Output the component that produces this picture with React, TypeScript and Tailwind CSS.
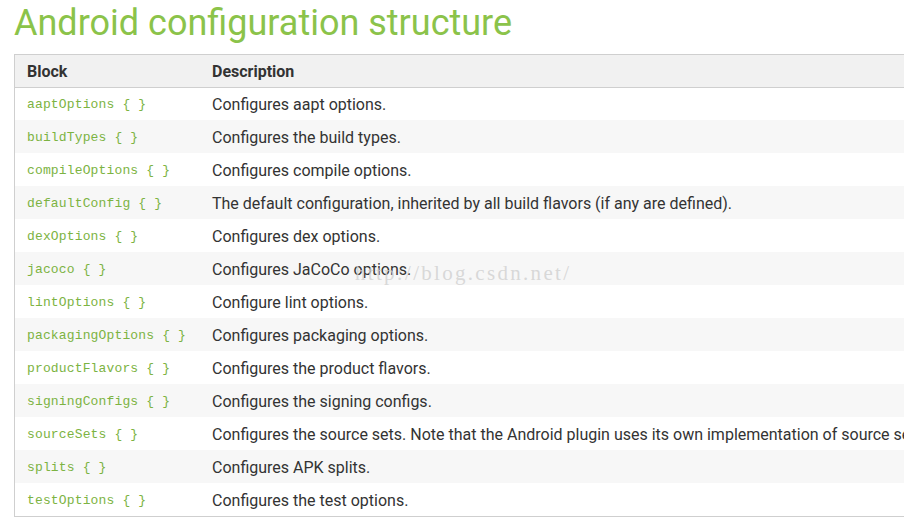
const rows: [string, string][] = [
  ["aaptOptions { }", "Configures aapt options."],
  ["buildTypes { }", "Configures the build types."],
  ["compileOptions { }", "Configures compile options."],
  ["defaultConfig { }", "The default configuration, inherited by all build flavors (if any are defined)."],
  ["dexOptions { }", "Configures dex options."],
  ["jacoco { }", "Configures JaCoCo options."],
  ["lintOptions { }", "Configure lint options."],
  ["packagingOptions { }", "Configures packaging options."],
  ["productFlavors { }", "Configures the product flavors."],
  ["signingConfigs { }", "Configures the signing configs."],
  [
    "sourceSets { }",
    "Configures the source sets. Note that the Android plugin uses its own implementation of source sets, which is not compatible with the Java plugin's source sets.",
  ],
  ["splits { }", "Configures APK splits."],
  ["testOptions { }", "Configures the test options."],
];

export default function App() {
  return (
    <div className="relative w-[904px] h-[522px] overflow-hidden bg-white font-['Roboto',sans-serif]">
      <h1 className="pl-[14px] pt-[1px] h-[54px] text-[36px] leading-[44px] text-[#8bc34a]">
        Android configuration structure
      </h1>
      <div className="ml-[14px] w-[1300px] border-t border-l border-b border-[#cfcfcf]">
        <div className="flex h-[33px] items-center pt-[2px] bg-[#f1f1f1] border-b border-[#cfcfcf] text-[16px] font-bold text-[#333]">
          <div className="w-[197px] shrink-0 pl-[12px]">Block</div>
          <div>Description</div>
        </div>
        {rows.map(([block, desc], i) => (
          <div
            key={block}
            className={`flex items-center pt-[2px] ${i === 0 ? "h-[32px]" : "h-[33px]"} ${i % 2 === 1 ? "bg-[#f7f7f7]" : "bg-white"}`}
          >
            <div className="w-[197px] shrink-0 pl-[12px] whitespace-nowrap font-['Liberation_Mono',monospace] text-[13px] tracking-[0.15px] text-[#7cb342]">
              {block}
            </div>
            <div className="whitespace-nowrap text-[16px] text-[#333]">{desc}</div>
          </div>
        ))}
      </div>
      <div className="pointer-events-none absolute left-[355px] top-[258px] font-['Liberation_Serif',serif] text-[21px] tracking-[2.3px] text-[#d0d0d0]/80">
        http://blog.csdn.net/
      </div>
    </div>
  );
}
